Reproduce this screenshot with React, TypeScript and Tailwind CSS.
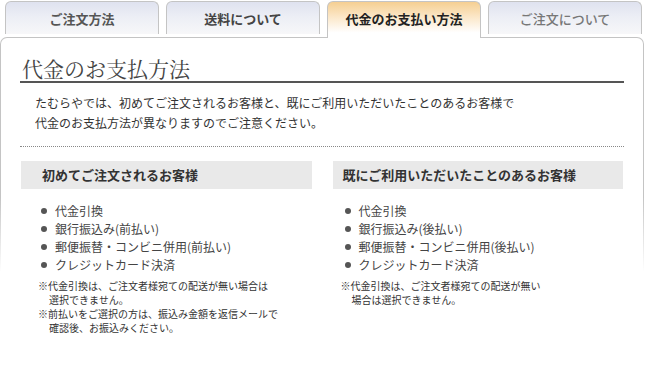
import React from "react";

const jp = "font-['Noto_Sans_CJK_JP','Noto_Sans_CJK_SC',sans-serif]";

function Tab({ label, active, className }: { label: string; active?: boolean; className?: string }) {
  if (active) {
    return (
      <div
        className={`relative z-10 flex h-[37px] w-[154px] items-start justify-center rounded-t-[6px] border border-b-0 border-[#c4c4c4] bg-[linear-gradient(to_bottom,#f5cf92_0%,#fbe6c6_40%,#ffffff_85%)] pt-[7px] text-[13px] font-bold text-[#222] ${className ?? ""}`}
      >
        {label}
      </div>
    );
  }
  return (
    <div
      className={`flex h-[33px] w-[154px] items-start justify-center rounded-t-[6px] border border-b-0 border-[#c4c4c4] bg-[linear-gradient(to_bottom,#dfe2ef_0%,#eceef5_45%,#f7f7f9_100%)] pt-[7px] text-[13px] ${className ?? ""}`}
    >
      {label}
    </div>
  );
}

function Bullet({ children }: { children: React.ReactNode }) {
  return (
    <li className="flex h-[18px] items-center">
      <span className="mr-[8px] inline-block h-[6px] w-[6px] rounded-full bg-[#555]" />
      <span>{children}</span>
    </li>
  );
}

export default function App() {
  return (
    <div className={`h-[380px] w-[645px] overflow-hidden bg-white ${jp}`}>
      <div className="relative z-10 flex h-[37px] items-start gap-[7px] pl-[5px] pt-[1px]">
        <Tab label="ご注文方法" className="font-bold text-[#555]" />
        <Tab label="送料について" className="font-bold text-[#444]" />
        <Tab label="代金のお支払い方法" active />
        <Tab label="ご注文について" className="font-medium text-[#777]" />
      </div>
      <div className="h-[343px] w-[644px] rounded-t-[7px] bg-[linear-gradient(to_bottom,#c4c4c4_0px,#c4c4c4_160px,#ffffff_235px)] px-[1px] pt-[1px]">
        <div className="h-full rounded-t-[6px] bg-white px-[19px] pt-[18px]">
          <h1 className="border-b-2 border-[#555] pl-[2px] text-[21px] leading-[25px] text-[#444] font-['Noto_Serif_CJK_JP','Noto_Serif_CJK_SC',serif] font-normal">
            代金のお支払方法
          </h1>
          <p className="mt-[10px] pl-[15px] text-[12px] leading-[20px] text-[#333]">
            たむらやでは、初めてご注文されるお客様と、既にご利用いただいたことのあるお客様で
            <br />
            代金のお支払方法が異なりますのでご注意ください。
          </p>
          <div className="mt-[13px] border-t border-dotted border-[#888]" />
          <div className="mt-[14px] grid grid-cols-2 gap-[21px] pl-[1px] pr-[1px]">
            <div>
              <div className="flex h-[28px] items-center bg-[#e9e9e9] pl-[21px] text-[13px] font-bold text-[#333]">
                初めてご注文されるお客様
              </div>
              <ul className="mt-[13px] pl-[20px] text-[12px] text-[#444]">
                <Bullet>代金引換</Bullet>
                <Bullet>銀行振込み(前払い)</Bullet>
                <Bullet>郵便振替・コンビニ併用(前払い)</Bullet>
                <Bullet>クレジットカード決済</Bullet>
              </ul>
              <div className="mt-[5px] pl-[17px] text-[10px] leading-[14px] text-[#333]">
                <div>※代金引換は、ご注文者様宛ての配送が無い場合は</div>
                <div className="pl-[11px]">選択できません。</div>
                <div>※前払いをご選択の方は、振込み金額を返信メールで</div>
                <div className="pl-[11px]">確認後、お振込みください。</div>
              </div>
            </div>
            <div>
              <div className="flex h-[28px] items-center bg-[#e9e9e9] pl-[10px] text-[13px] font-bold text-[#333]">
                既にご利用いただいたことのあるお客様
              </div>
              <ul className="mt-[13px] pl-[12px] text-[12px] text-[#444]">
                <Bullet>代金引換</Bullet>
                <Bullet>銀行振込み(後払い)</Bullet>
                <Bullet>郵便振替・コンビニ併用(後払い)</Bullet>
                <Bullet>クレジットカード決済</Bullet>
              </ul>
              <div className="mt-[5px] pl-[8px] text-[10px] leading-[14px] text-[#333]">
                <div>※代金引換は、ご注文者様宛ての配送が無い</div>
                <div className="pl-[11px]">場合は選択できません。</div>
              </div>
            </div>
          </div>
        </div>
      </div>
    </div>
  );
}
